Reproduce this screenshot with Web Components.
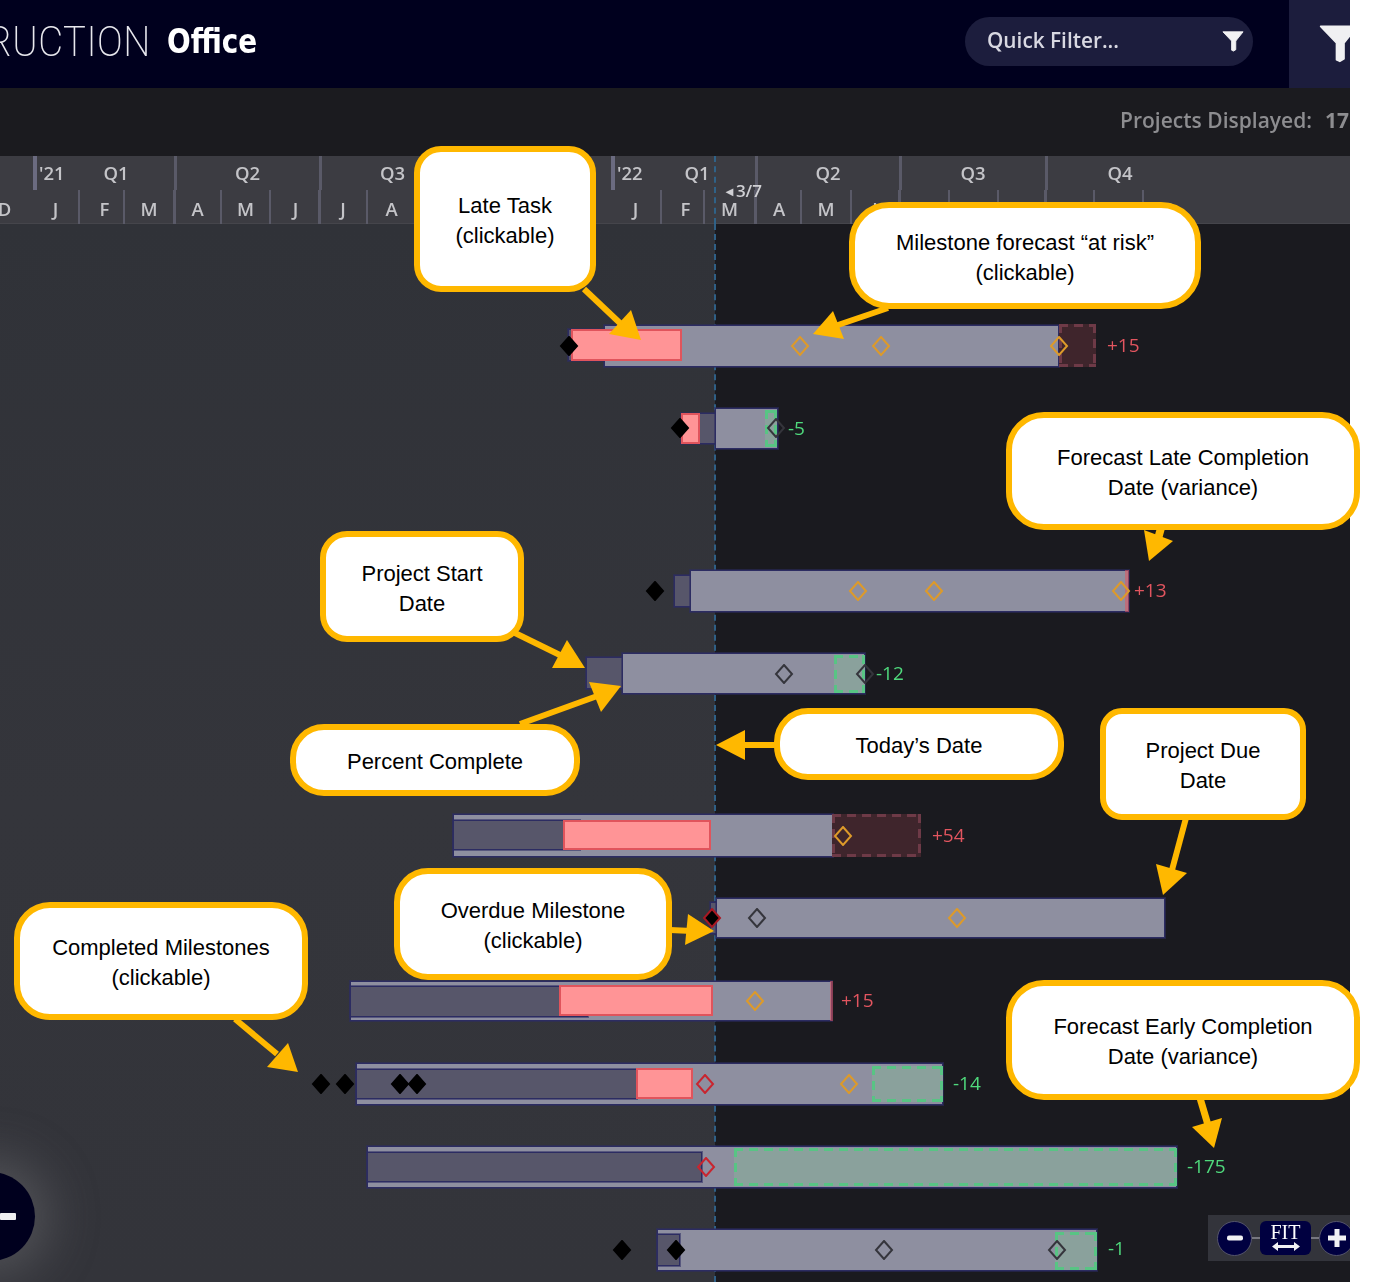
<!DOCTYPE html>
<html>
<head>
<meta charset="utf-8">
<title>Gantt</title>
<style>
  html, body { margin: 0; background: #fff; }
  body { width: 1374px; height: 1282px; overflow: hidden; }
</style>
</head>
<body>
<gantt-stage>
  <top-bar></top-bar>
  <info-bar></info-bar>
  <time-header></time-header>
  <gantt-chart>
    <!-- row 1 -->
    <gantt-bar kind="pre" x="568" y="329" w="40" h="32"></gantt-bar>
    <gantt-bar kind="main" x="604" y="325" w="455" h="42"></gantt-bar>
    <gantt-bar kind="late" x="571" y="329" w="111" h="32"></gantt-bar>
    <gantt-bar kind="over" x="1059" y="324" w="37" h="43"></gantt-bar>
    <gantt-mark kind="black" x="569" y="346"></gantt-mark>
    <gantt-mark kind="orange" x="799.5" y="346"></gantt-mark>
    <gantt-mark kind="orange" x="881" y="346"></gantt-mark>
    <gantt-mark kind="orange" x="1059" y="346"></gantt-mark>
    <gantt-var x="1107" y="345" tone="red">+15</gantt-var>
    <!-- row 2 -->
    <gantt-bar kind="pre" x="681" y="413" w="36" h="31"></gantt-bar>
    <gantt-bar kind="late" x="681" y="413" w="19" h="31"></gantt-bar>
    <gantt-bar kind="main" x="715" y="408" w="63" h="41"></gantt-bar>
    <gantt-bar kind="under" x="765" y="410" w="12" h="37"></gantt-bar>
    <gantt-mark kind="black" x="680" y="428"></gantt-mark>
    <gantt-mark kind="dark" x="776" y="428"></gantt-mark>
    <gantt-var x="788" y="428" tone="green">-5</gantt-var>
    <!-- row 3 -->
    <gantt-bar kind="pre" x="674" y="575" w="18" h="32"></gantt-bar>
    <gantt-bar kind="main" x="690" y="570" w="439" h="42"></gantt-bar>
    <gantt-bar kind="edge" x="1125" y="570" w="4" h="42"></gantt-bar>
    <gantt-mark kind="black" x="655" y="591"></gantt-mark>
    <gantt-mark kind="orange" x="858" y="591"></gantt-mark>
    <gantt-mark kind="orange" x="933.5" y="591"></gantt-mark>
    <gantt-mark kind="orange" x="1121" y="591"></gantt-mark>
    <gantt-var x="1134" y="590" tone="red">+13</gantt-var>
    <!-- row 4 -->
    <gantt-bar kind="pre" x="586" y="657" w="38" h="32"></gantt-bar>
    <gantt-bar kind="main" x="622" y="653" w="243" h="41"></gantt-bar>
    <gantt-bar kind="under" x="834" y="655" w="31" h="38"></gantt-bar>
    <gantt-mark kind="dark" x="784" y="673.5"></gantt-mark>
    <gantt-mark kind="dark" x="865" y="673.5"></gantt-mark>
    <gantt-var x="876" y="673" tone="green">-12</gantt-var>
    <!-- row 5 -->
    <gantt-bar kind="main" x="453" y="814" w="380" h="43"></gantt-bar>
    <gantt-bar kind="done" x="453" y="820" w="127" h="30"></gantt-bar>
    <gantt-bar kind="late" x="563" y="820" w="148" h="30"></gantt-bar>
    <gantt-bar kind="over" x="832" y="814" w="89" h="43"></gantt-bar>
    <gantt-mark kind="orange" x="842.5" y="835.5"></gantt-mark>
    <gantt-var x="932" y="835" tone="red">+54</gantt-var>
    <!-- row 6 -->
    <gantt-bar kind="pre" x="710" y="902" w="8" h="32"></gantt-bar>
    <gantt-bar kind="main" x="716" y="898" w="449" h="40"></gantt-bar>
    <gantt-mark kind="overdue" x="711.5" y="918"></gantt-mark>
    <gantt-mark kind="dark" x="757" y="918"></gantt-mark>
    <gantt-mark kind="orange" x="957" y="918"></gantt-mark>
    <!-- row 7 -->
    <gantt-bar kind="main" x="350" y="981" w="482" h="40"></gantt-bar>
    <gantt-bar kind="done" x="350" y="986" w="238" h="31"></gantt-bar>
    <gantt-bar kind="late" x="559" y="985" w="154" h="31"></gantt-bar>
    <gantt-bar kind="edge" x="830" y="981" w="3" h="40"></gantt-bar>
    <gantt-mark kind="orange" x="755" y="1001"></gantt-mark>
    <gantt-var x="841" y="1000" tone="red">+15</gantt-var>
    <!-- row 8 -->
    <gantt-bar kind="main" x="356" y="1063" w="587" h="42"></gantt-bar>
    <gantt-bar kind="done" x="356" y="1069" w="281" h="30"></gantt-bar>
    <gantt-bar kind="late" x="636" y="1068" w="57" h="31"></gantt-bar>
    <gantt-bar kind="under" x="872" y="1066" w="71" h="36"></gantt-bar>
    <gantt-mark kind="black" x="321" y="1084"></gantt-mark>
    <gantt-mark kind="black" x="344.5" y="1084"></gantt-mark>
    <gantt-mark kind="black" x="400" y="1084"></gantt-mark>
    <gantt-mark kind="black" x="417" y="1084"></gantt-mark>
    <gantt-mark kind="red" x="704.5" y="1084"></gantt-mark>
    <gantt-mark kind="orange" x="849" y="1084"></gantt-mark>
    <gantt-var x="953" y="1083" tone="green">-14</gantt-var>
    <!-- row 9 -->
    <gantt-bar kind="main" x="367" y="1146" w="810" h="42"></gantt-bar>
    <gantt-bar kind="done" x="367" y="1152" w="335" h="30"></gantt-bar>
    <gantt-bar kind="under" x="734" y="1148" w="443" h="38"></gantt-bar>
    <gantt-mark kind="red" x="705.5" y="1167"></gantt-mark>
    <gantt-var x="1187" y="1166" tone="green">-175</gantt-var>
    <!-- row 10 -->
    <gantt-bar kind="main" x="657" y="1229" w="440" h="42"></gantt-bar>
    <gantt-bar kind="done" x="657" y="1234" w="23" h="32"></gantt-bar>
    <gantt-bar kind="under" x="1055" y="1232" w="42" h="38"></gantt-bar>
    <gantt-mark kind="black" x="621.5" y="1249.5"></gantt-mark>
    <gantt-mark kind="black" x="676" y="1249.5"></gantt-mark>
    <gantt-mark kind="dark" x="884" y="1249.5"></gantt-mark>
    <gantt-mark kind="dark" x="1057" y="1249.5"></gantt-mark>
    <gantt-var x="1108" y="1248" tone="green">-1</gantt-var>

    <side-fab></side-fab>
    <zoom-control></zoom-control>
  </gantt-chart>

  <callout-arrows></callout-arrows>
  <call-out style="left:414px;top:146px;width:182px;height:146px;--r:27px">Late Task<br>(clickable)</call-out>
  <call-out style="left:849px;top:202px;width:352px;height:107px;--r:40px">Milestone forecast “at risk”<br>(clickable)</call-out>
  <call-out style="left:1006px;top:412px;width:354px;height:118px;--r:38px">Forecast Late Completion<br>Date (variance)</call-out>
  <call-out style="left:320px;top:531px;width:204px;height:111px;--r:27px">Project Start<br>Date</call-out>
  <call-out style="left:290px;top:724px;width:290px;height:72px;--r:34px">Percent Complete</call-out>
  <call-out style="left:774px;top:708px;width:290px;height:72px;--r:34px">Today’s Date</call-out>
  <call-out style="left:1100px;top:708px;width:206px;height:112px;--r:22px">Project Due<br>Date</call-out>
  <call-out style="left:394px;top:868px;width:278px;height:112px;--r:34px">Overdue Milestone<br>(clickable)</call-out>
  <call-out style="left:14px;top:902px;width:294px;height:118px;--r:36px">Completed Milestones<br>(clickable)</call-out>
  <call-out style="left:1006px;top:980px;width:354px;height:120px;--r:38px">Forecast Early Completion<br>Date (variance)</call-out>
</gantt-stage>

<script>
const CHART_TOP = 224;
const UI_FONT = '"Open Sans", "Noto Sans", sans-serif';

function funnel(size, color) {
  return `<svg width="${size}" height="${size}" viewBox="0 0 24 24"><path fill="${color}" d="M1 2h22L15 12v9.500l-2.500 1.500-2-1V12z" stroke="${color}" stroke-linejoin="round"/></svg>`;
}

// dashes are painted as gradients, border-style dashed is too fine for the reference
function dashes(color, t) {
  const h = `repeating-linear-gradient(90deg, ${color} 0 9px, transparent 9px 15px)`;
  const v = `repeating-linear-gradient(180deg, ${color} 0 9px, transparent 9px 15px)`;
  return `${h} top/100% ${t}px no-repeat, ${h} bottom/100% ${t}px no-repeat, ${v} left/${t}px 100% no-repeat, ${v} right/${t}px 100% no-repeat`;
}

class GanttStage extends HTMLElement {
  constructor() {
    super();
    this.attachShadow({ mode: 'open' }).innerHTML = `
      <style>
        :host { display: block; position: relative; width: 1350px; height: 1282px; }
        .clip { width: 1350px; height: 1282px; overflow: hidden; }
        .app { display: flex; flex-direction: column; width: 1350px; height: 1282px; background: #1a1a1f; filter: blur(.45px); }
      </style>
      <div class="clip"><div class="app"><slot name="app"></slot></div></div>
      <slot></slot>
    `;
  }
  connectedCallback() {
    for (const el of this.querySelectorAll(':scope > top-bar, :scope > info-bar, :scope > time-header, :scope > gantt-chart')) {
      el.slot = 'app';
    }
  }
}

class TopBar extends HTMLElement {
  constructor() {
    super();
    this.attachShadow({ mode: 'open' }).innerHTML = `
      <style>
        :host { display: flex; align-items: center; flex: 0 0 88px; background: #00001e; overflow: hidden; color: #fff; }
        .brand { display: flex; align-items: center; gap: 17px; width: 965px; margin-top: -6px; white-space: nowrap; }
        .thin { font: 200 43px Roboto, sans-serif; margin-left: -13px; width: 163px; display: inline-block; transform: scaleX(.89); transform-origin: 0 50%; letter-spacing: .6px; color: #e8e8ee; }
        .bold { font: bold 34px "DejaVu Sans Condensed", "DejaVu Sans", sans-serif; transform: scaleX(.91); transform-origin: 0 50%; }
        .pill { display: flex; align-items: center; justify-content: space-between; box-sizing: border-box; width: 288px; height: 49px; padding: 0 9px 0 22px; margin-top: -6px; border-radius: 25px; background: #1c1d3d; font: 600 20.800px ${UI_FONT}; color: #d8d8e2; }
        .pill span { margin-top: -2px; }
        .btn { display: flex; align-items: center; height: 88px; margin-left: 36px; flex: 1; background: #1c1d3d; padding-left: 30px; padding-bottom: 2px; box-sizing: border-box; overflow: hidden; }
        svg { display: block; flex: none; }
      </style>
      <div class="brand"><span class="thin">RUCTION</span><span class="bold">Office</span></div>
      <div class="pill"><span>Quick Filter...</span>${funnel(22, '#f2f2f4')}</div>
      <div class="btn">${funnel(40, '#f0f0f2')}</div>
    `;
  }
}

class InfoBar extends HTMLElement {
  constructor() {
    super();
    this.attachShadow({ mode: 'open' }).innerHTML = `
      <style>
        :host { display: flex; align-items: center; justify-content: flex-end; flex: 0 0 68px; padding-bottom: 4px; box-sizing: border-box; background: #1b1b1f; font: 600 21px ${UI_FONT}; color: #8d8d90; white-space: nowrap; overflow: hidden; }
        b { margin-left: 13px; font-weight: 700; margin-right: 1px; }
      </style>
      <span>Projects Displayed:</span><b>17</b>
    `;
  }
}

class TimeHeader extends HTMLElement {
  constructor() {
    super();
    // start, end, label, year, left padding next to the year
    const quarters = [
      [-10, 33, ''], [33, 175, 'Q1', "'21", 22], [175, 320, 'Q2'], [320, 465, 'Q3'], [465, 611, ''],
      [611, 756, 'Q1', "'22", 25], [756, 900, 'Q2'], [900, 1046, 'Q3'], [1046, 1194, 'Q4']
    ];
    // start, end, label, nudge of the label in px
    const months = [
      [-10, 33, 'D', -7], [33, 80, 'J', 0], [80, 125, 'F', 3], [125, 175, 'M', 0], [175, 222, 'A', 0], [222, 271, 'M', 0],
      [271, 320, 'J', 1], [320, 368, 'J', 0], [368, 417, 'A', 0], [417, 465, ''], [465, 514, ''], [514, 563, ''], [563, 611, ''],
      [611, 662, 'J', 0], [662, 705, 'F', 3], [705, 756, 'M', 0], [756, 802, 'A', 1], [802, 852, 'M', 0], [852, 900, 'J', 0],
      [900, 950, 'J', 0], [950, 999, 'A', 0], [999, 1046, 'S', 0], [1046, 1095, 'O', 0], [1095, 1144, 'N', 0], [1144, 1194, 'D', 0]
    ];
    const qs = quarters.map(([a, b, label, year, pad]) =>
      `<div class="q ${year ? 'yr' : ''}" style="width:${b - a}px;${pad ? `padding-left:${pad}px` : ''}">${year ? `<i>${year}</i>` : ''}<span>${label}</span></div>`).join('');
    const ms = months.map(([a, b, label, nudge], i) => {
      const pad = nudge > 0 ? `padding-left:${nudge * 2}px` : nudge < 0 ? `padding-right:${-nudge * 2}px` : '';
      return `<div class="m ${i === months.length - 1 ? 'last' : ''} ${b === 33 || b === 611 ? 'thick' : ''}" style="width:${b - a}px;${pad}">${label}</div>`;
    }).join('');
    this.attachShadow({ mode: 'open' }).innerHTML = `
      <style>
        :host { display: block; position: relative; flex: 0 0 68px; background: #3c3c42; overflow: hidden; font: 600 18.500px ${UI_FONT}; color: #c4c4c8; box-shadow: inset 0 -1px 0 #45454b; }
        .row { display: flex; margin-left: -10px; width: 1400px; box-sizing: border-box; }
        .q { box-sizing: border-box; height: 34px; display: flex; align-items: center; justify-content: center; position: relative; flex: none; border-left: 2px solid #5a5a68; padding-bottom: 1px; padding-right: 2px; }
        .q:first-child { border-left: 0; }
        .q.yr { border-left: 4px solid #6b6b80; }
        .q i { position: absolute; left: 2px; font-style: normal; }
        .m { box-sizing: border-box; height: 34px; flex: none; display: flex; align-items: center; justify-content: center; border-right: 2px solid #5a5a68; padding-top: 3px; }
        .m.thick { border-right: 0; }
        .m.last { border-right: 0; }
        .tick { position: absolute; left: 755px; top: 0; width: 2px; height: 68px; background: #5a5a68; }
        .tick.two { left: 899px; }
        .tick.three { left: 1045px; }
        .tick.four { left: 174px; }
        .tick.five { left: 319px; }
        .today { position: absolute; left: 723px; top: 23px; font: 600 17px ${UI_FONT}; color: #d0d0d4; white-space: nowrap; }
        .today small { font-size: 13px; vertical-align: 1px; }
        .line { position: absolute; left: 714px; top: 0; width: 0; height: 68px; border-left: 2px dashed #2f6288; }
      </style>
      <div class="row">${qs}</div>
      <div class="row">${ms}</div>
      <div class="tick"></div><div class="tick two"></div><div class="tick three"></div><div class="tick four"></div><div class="tick five"></div>
      <div class="line"></div>
      <div class="today"><small>◄</small>3/7</div>
    `;
  }
}

class GanttChart extends HTMLElement {
  constructor() {
    super();
    this.attachShadow({ mode: 'open' }).innerHTML = `
      <style>
        :host { display: grid; grid-template-columns: 715px 1fr; position: relative; flex: 1; overflow: hidden; background: #1a1a1f; }
        .past { background: linear-gradient(180deg, #303238, #34353b 55%, #33343a); }
        .today { position: absolute; left: 714px; top: 0; bottom: 0; width: 0; border-left: 2px dashed #2f5f85; }
      </style>
      <div class="past"></div>
      <div></div>
      <div class="today"></div>
      <slot></slot>
    `;
  }
}

class GanttBar extends HTMLElement {
  constructor() {
    super();
    this.attachShadow({ mode: 'open' }).innerHTML = `
      <style>
        :host { display: block; position: absolute; box-sizing: border-box; }
        :host([kind=main]) { background: #8e8fa0; border: 1px solid #2c2c62; box-shadow: 0 0 0 1px rgba(44,44,98,.55); }
        :host([kind=pre]), :host([kind=done]) { background: #57566a; border: 1px solid #2c2c62; box-shadow: 0 0 0 1px rgba(44,44,98,.55); }
        :host([kind=late]) { background: #ff9496; border: 2px solid #e0545c; }
        :host([kind=over]) { background: ${dashes('#6e3a47', 3)}, #3f252c; }
        :host([kind=under]) { background: ${dashes('#58c484', 3)}, #8aa19c; }
        :host([kind=edge]) { background: rgba(226,85,95,.55); }
      </style>
    `;
  }
  connectedCallback() {
    const a = n => this.getAttribute(n);
    this.style.cssText = `left:${a('x')}px;top:${a('y') - CHART_TOP}px;width:${a('w')}px;height:${a('h')}px`;
  }
}

class GanttMark extends HTMLElement {
  constructor() {
    super();
    const styles = {
      black: 'fill="#000" stroke="#000"',
      orange: 'fill="none" stroke="#dd9a2a"',
      dark: 'fill="none" stroke="#35353c"',
      red: 'fill="none" stroke="#c9252f"',
      overdue: 'fill="#000" stroke="#a81822"'
    };
    this.attachShadow({ mode: 'open' }).innerHTML = `
      <style>
        :host { display: block; position: absolute; width: 20px; height: 20px; }
        svg { display: block; }
      </style>
      <svg width="20" height="20" viewBox="0 0 20 20"><polygon points="10,1 18,10 10,19 2,10" stroke-width="2" ${styles[this.getAttribute('kind')]}/></svg>
    `;
  }
  connectedCallback() {
    this.style.left = (this.getAttribute('x') - 10) + 'px';
    this.style.top = (this.getAttribute('y') - CHART_TOP - 10) + 'px';
  }
}

class GanttVar extends HTMLElement {
  constructor() {
    super();
    this.attachShadow({ mode: 'open' }).innerHTML = `
      <style>
        :host { display: block; position: absolute; font: 500 19px/26px ${UI_FONT}; white-space: nowrap; }
        :host([tone=red]) { color: #e2555f; }
        :host([tone=green]) { color: #4fd97c; }
      </style>
      <slot></slot>
    `;
  }
  connectedCallback() {
    this.style.left = this.getAttribute('x') + 'px';
    this.style.top = (this.getAttribute('y') - CHART_TOP - 13) + 'px';
  }
}

class SideFab extends HTMLElement {
  constructor() {
    super();
    this.attachShadow({ mode: 'open' }).innerHTML = `
      <style>
        :host { display: block; position: absolute; left: -54px; top: 948px; width: 89px; height: 89px; border-radius: 50%; background: #00001e; box-shadow: 0 0 50px 14px rgba(120,120,125,.45); }
        i { position: absolute; left: 54px; top: 41px; width: 16px; height: 7px; border-radius: 1px; background: #eeeef0; }
      </style>
      <i></i>
    `;
  }
}

class ZoomControl extends HTMLElement {
  constructor() {
    super();
    this.attachShadow({ mode: 'open' }).innerHTML = `
      <style>
        :host { display: flex; align-items: center; position: absolute; left: 1208px; top: 991px; box-sizing: border-box; width: 150px; height: 46px; padding-left: 9px; background: #33343b; font: 400 20px "Liberation Serif", serif; color: #fff; }
        .c { flex: none; box-sizing: border-box; width: 35px; height: 35px; border-radius: 50%; background: #000040; border: 1px solid #55556a; display: flex; align-items: center; justify-content: center; }
        .link { flex: none; width: 8px; height: 2px; background: #77777f; }
        .fit { flex: none; box-sizing: border-box; width: 51px; height: 34px; border-radius: 6px; background: #000040; display: flex; flex-direction: column; align-items: center; line-height: 18px; padding-top: 2px; }
        svg { display: block; }
      </style>
      <div class="c"><svg width="22" height="22" viewBox="0 0 22 22"><rect x="3" y="8.500" width="16" height="5" rx="2" fill="#f2f2f4"/></svg></div>
      <div class="link"></div>
      <div class="fit">FIT<svg width="30" height="11" viewBox="0 0 30 11"><path fill="#f2f2f4" d="M1 5.500 7 1v3h16V1l6 4.500-6 4.500V7H7v3z"/></svg></div>
      <div class="link"></div>
      <div class="c"><svg width="24" height="24" viewBox="0 0 24 24"><path fill="#f2f2f4" d="M9.500 3h5v6.500H21v5h-6.500V21h-5v-6.500H3v-5h6.500z"/></svg></div>
    `;
  }
}

class CallOut extends HTMLElement {
  constructor() {
    super();
    this.attachShadow({ mode: 'open' }).innerHTML = `
      <style>
        :host { display: flex; align-items: center; justify-content: center; position: absolute; box-sizing: border-box; padding-top: 4px; background: #fff; border: 6px solid #ffb800; border-radius: var(--r, 30px); font: 22px/30px "Liberation Sans", Arial, sans-serif; color: #000; text-align: center; white-space: nowrap; }
      </style>
      <div><slot></slot></div>
    `;
  }
}

class CalloutArrows extends HTMLElement {
  constructor() {
    super();
    const arrows = [
      // shaft x1 y1 x2 y2 width, then head tip and two base points
      [584, 289, 622, 325, 6, '641,340 631,310 609,334'],
      [888, 308, 835, 326, 6, '813,334 833,311 844,339'],
      [1161, 528, 1156, 546, 8, '1149,561 1144,530 1173,541'],
      [515, 633, 566, 658, 6, '585,668 567,640 552,668'],
      [520, 724, 600, 695, 6, '621,686 589,682 601,712'],
      [776, 745, 740, 745, 6, '716,745 745,730 745,760'],
      [1186, 818, 1172, 870, 6, '1163,895 1156,864 1187,873'],
      [670, 930, 692, 931, 6, '714,931 688,914 685,945'],
      [235, 1019, 277, 1054, 6, '298,1072 288,1043 267,1067'],
      [1200, 1098, 1208, 1125, 7, '1214,1148 1192,1127 1222,1118']
    ];
    const shapes = arrows.map(([x1, y1, x2, y2, w, head]) =>
      `<line x1="${x1}" y1="${y1}" x2="${x2}" y2="${y2}" stroke="#ffb800" stroke-width="${w}"/><polygon points="${head}" fill="#ffb800"/>`).join('');
    this.attachShadow({ mode: 'open' }).innerHTML = `
      <style>
        :host { display: block; position: absolute; left: 0; top: 0; width: 1374px; height: 1282px; pointer-events: none; }
        svg { display: block; }
      </style>
      <svg width="1374" height="1282" viewBox="0 0 1374 1282">${shapes}</svg>
    `;
  }
}

customElements.define('gantt-stage', GanttStage);
customElements.define('top-bar', TopBar);
customElements.define('info-bar', InfoBar);
customElements.define('time-header', TimeHeader);
customElements.define('gantt-chart', GanttChart);
customElements.define('gantt-bar', GanttBar);
customElements.define('gantt-mark', GanttMark);
customElements.define('gantt-var', GanttVar);
customElements.define('side-fab', SideFab);
customElements.define('zoom-control', ZoomControl);
customElements.define('call-out', CallOut);
customElements.define('callout-arrows', CalloutArrows);
</script>
</body>
</html>
